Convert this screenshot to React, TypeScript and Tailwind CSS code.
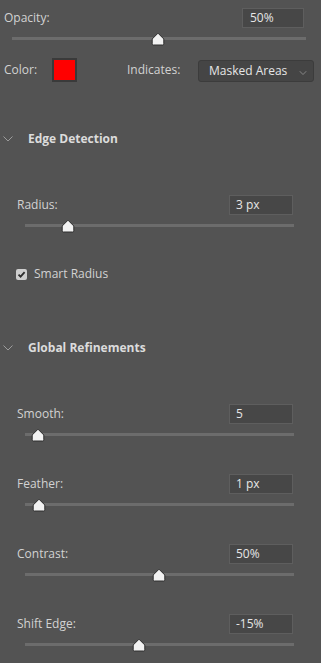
import React from "react";

const Thumb = ({ x }: { x: number }) => (
  <svg
    width="14"
    height="14"
    viewBox="0 0 14 14"
    className="absolute"
    style={{ left: x - 7, top: -5 }}
  >
    <path
      d="M7 1.2 L12.8 7 L12.8 11.8 Q12.8 13 11.6 13 L2.4 13 Q1.2 13 1.2 11.8 L1.2 7 Z"
      fill="#f2f2f2"
      stroke="#2e2e2e"
      strokeWidth="1"
    />
  </svg>
);

const Track = ({ left, width, x, mt }: { left: number; width: number; x: number; mt: string }) => (
  <div className={`relative h-[3px] bg-[#6c6c6c] ${mt}`} style={{ marginLeft: left, width }}>
    <Thumb x={x} />
  </div>
);

const Box = ({ value, w, pl }: { value: string; w: string; pl: string }) => (
  <div className={`h-[20px] ${w} ${pl} bg-[#474747] border border-[#5e5e5e] flex items-center text-[#e6e6e6] text-[12px] leading-none`}>
    {value}
  </div>
);

const Chevron = ({ className }: { className?: string }) => (
  <svg width="10" height="6" viewBox="0 0 10 6" className={className}>
    <path d="M0.5 0.5 L5 5 L9.5 0.5" fill="none" stroke="#9c9c9c" strokeWidth="1" />
  </svg>
);

const Group = ({ label, value, x, mt }: { label: string; value: string; x: number; mt: string }) => (
  <div className={mt}>
    <div className="flex items-center justify-between pl-[17px] pr-[28px]">
      <span className="text-[#d2d2d2] text-[12px]">{label}</span>
      <Box value={value} w="w-[64px]" pl="pl-[6px]" />
    </div>
    <Track left={25} width={269} x={x} mt="mt-[9px]" />
  </div>
);

const Header = ({ title, mt }: { title: string; mt: string }) => (
  <div className={`flex items-center h-[16px] ${mt}`}>
    <Chevron className="ml-[3px]" />
    <span className="ml-[15px] text-[#dcdcdc] text-[12px] font-bold">{title}</span>
  </div>
);

export default function App() {
  return (
    <div
      className="w-[321px] h-[663px] bg-[#535353] overflow-hidden text-[12px]"
      style={{ fontFamily: '"Open Sans", "Noto Sans", sans-serif' }}
    >
      <div className="pt-[8px]">
        <div className="flex items-center justify-between pl-[4px] pr-[17px]">
          <span className="text-[#d2d2d2]">Opacity:</span>
          <Box value="50%" w="w-[62px]" pl="pl-[7px]" />
        </div>
        <Track left={12} width={294} x={146} mt="mt-[9px]" />
        <div className="flex items-center mt-[18px] h-[24px]">
          <span className="ml-[4px] text-[#d2d2d2] w-[48px]">Color:</span>
          <div className="w-[25px] h-[24px] bg-[#ff0000] border-2 border-[#3a3a3a]" />
          <span className="ml-[50px] text-[#d2d2d2] w-[71px]">Indicates:</span>
          <div className="relative w-[116px] h-[22px] mt-[2px] bg-[#454545] border border-[#3c3c3c] rounded-[3px] flex items-center pl-[10px] text-[#e6e6e6]">
            Masked Areas
            <Chevron className="absolute right-[5px] top-[9px] scale-75" />
          </div>
        </div>
      </div>

      <Header title="Edge Detection" mt="mt-[49px]" />
      <Group label="Radius:" value="3 px" x={43} mt="mt-[48px]" />

      <div className="flex items-center mt-[39px] h-[16px]">
        <div className="ml-[16px] w-[11px] h-[11px] rounded-[2px] bg-[#cfcfcf] flex items-center justify-center">
          <svg width="9" height="9" viewBox="0 0 9 9">
            <path d="M1.5 4.6 L3.6 6.7 L7.6 2.2" fill="none" stroke="#2e2e2e" strokeWidth="1.8" />
          </svg>
        </div>
        <span className="ml-[7px] text-[#d2d2d2]">Smart Radius</span>
      </div>

      <Header title="Global Refinements" mt="mt-[58px]" />
      <Group label="Smooth:" value="5" x={13} mt="mt-[48px]" />
      <Group label="Feather:" value="1 px" x={14} mt="mt-[38px]" />
      <Group label="Contrast:" value="50%" x={134} mt="mt-[38px]" />
      <Group label="Shift Edge:" value="-15%" x={114} mt="mt-[38px]" />
    </div>
  );
}
